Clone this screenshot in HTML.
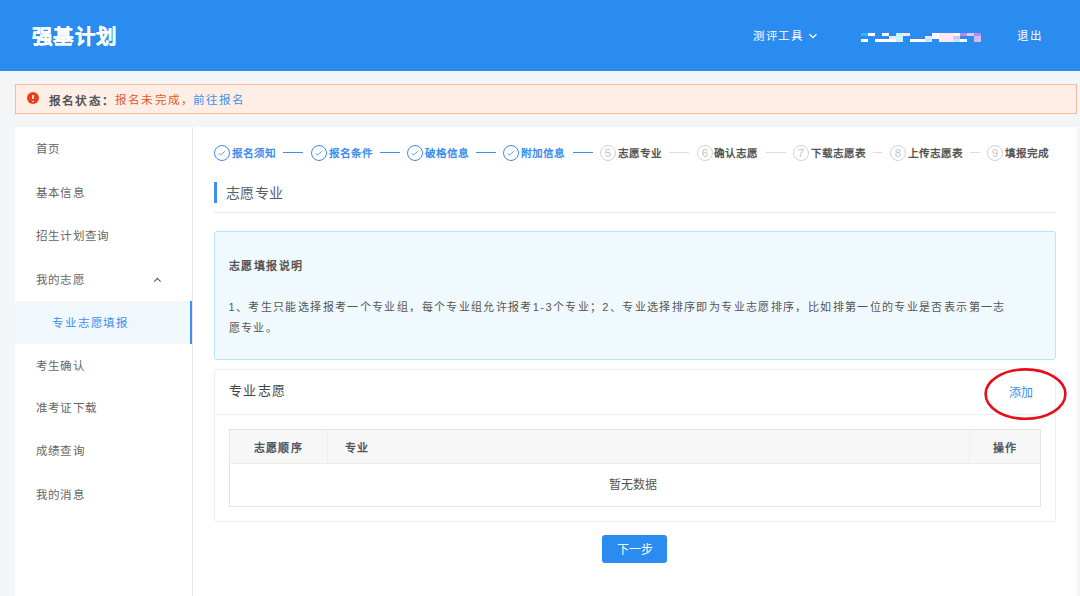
<!DOCTYPE html>
<html lang="zh-CN"><head><meta charset="utf-8">
<style>
*{margin:0;padding:0;box-sizing:border-box}
html,body{width:1080px;height:596px;overflow:hidden}
body{background:#f4f5f7;font-family:"Liberation Sans",sans-serif;color:#333;position:relative}
.a{position:absolute;white-space:nowrap}
#hdr{left:0;top:0;width:1080px;height:71px;background:#2a8cee}
#title{left:32px;top:22.5px;font-size:20.5px;letter-spacing:1.4px;font-weight:bold;color:#fff;-webkit-text-stroke:0.3px #fff;line-height:28px}
.hl{color:#fff;font-size:11.5px;letter-spacing:1.5px;line-height:16px}
#alert{left:15px;top:84px;width:1062px;height:30px;background:#ffeee6;border:1px solid #fbb99c}
#side{left:15px;top:127px;width:178px;height:469px;background:#fff;border-right:1px solid #e6e6e6}
#main{left:193px;top:127px;width:884px;height:469px;background:#fff}
.nav{left:36px;font-size:11.5px;letter-spacing:1.2px;color:#666;line-height:16px}
.st{font-size:10.6px;font-weight:bold;line-height:14px;top:146px}
.done{color:#3d8ef0}
.todo{color:#555}
.ci{width:16px;height:16px;border-radius:50%;top:145px}
.ci.d{border:1px solid #3d8ef0}
.ci.t{border:1px solid #d2d2d2;color:#c4c4c4;font-size:11.5px;line-height:14px;text-align:center;font-weight:normal}
.ln{height:1px;top:152px}
.ln.d{background:#3d8ef0}
.ln.t{background:#ddd}
</style></head>
<body>
<div id="hdr" class="a"></div>
<div id="title" class="a">强基计划</div>
<div class="a hl" style="left:753px;top:27.5px">测评工具</div>
<svg class="a" style="left:808px;top:32px" width="10" height="7" viewBox="0 0 10 7"><path d="M1.5 2.2 L5 5.6 L8.5 2.2" fill="none" stroke="#fff" stroke-width="1.3"/></svg>
<svg class="a" style="left:861px;top:33px" width="121" height="9" viewBox="0 0 121 9">
<rect x="0" y="0" width="7" height="3" fill="#2bb8f4"/><rect x="7" y="0" width="7" height="3" fill="#fff"/>
<rect x="21" y="0" width="7" height="3" fill="#fff"/><rect x="35" y="0" width="7" height="9" fill="#c8f3fb"/>
<rect x="42" y="0" width="7" height="3" fill="#fde4ee"/><rect x="28" y="3" width="7" height="3" fill="#fbe3ef"/>
<rect x="0" y="6" width="7" height="3" fill="#fff"/><rect x="14" y="6" width="21" height="3" fill="#fff"/>
<rect x="49" y="6" width="15" height="3" fill="#fff"/>
<rect x="71" y="0" width="7" height="6" fill="#fff"/><rect x="78" y="0" width="14" height="9" fill="#fde8f2"/>
<rect x="92" y="0" width="7" height="3" fill="#fdf0f6"/><rect x="99" y="0" width="7" height="3" fill="#b98ae8"/>
<rect x="106" y="0" width="7" height="3" fill="#dac8f0"/><rect x="113" y="0" width="7" height="3" fill="#b98ae8"/>
<rect x="64" y="3" width="7" height="3" fill="#efe0f4"/><rect x="92" y="3" width="7" height="3" fill="#d4c4f2"/>
<rect x="113" y="3" width="7" height="6" fill="#cdbdf0"/>
<rect x="64" y="6" width="7" height="3" fill="#b3ecfb"/><rect x="92" y="6" width="7" height="3" fill="#b3ecfb"/>
<rect x="99" y="6" width="7" height="3" fill="#fff"/>
</svg>
<div class="a hl" style="left:1017px;top:27.5px">退出</div>

<div id="alert" class="a"></div>
<div class="a" style="left:27px;top:92px;width:12px;height:12px;border-radius:50%;background:#e8401c"></div>
<div class="a" style="left:32.4px;top:94.5px;width:1.2px;height:4.5px;background:#ffd8cc"></div>
<div class="a" style="left:32.4px;top:100.5px;width:1.2px;height:1.2px;background:#ffd8cc"></div>
<div class="a" style="left:49px;top:92.5px;font-size:11.6px;line-height:16px;letter-spacing:1.2px;font-weight:bold;color:#555">报名状态：</div><div class="a" style="left:115px;top:92px;font-size:11.6px;line-height:16px;letter-spacing:1.2px;color:#e0582c">报名未完成，</div><div class="a" style="left:192.5px;top:92px;font-size:11.6px;line-height:16px;letter-spacing:1.2px;color:#3d8ef0">前往报名</div>

<div id="side" class="a"></div>
<div class="a nav" style="top:141px">首页</div>
<div class="a nav" style="top:184.5px">基本信息</div>
<div class="a nav" style="top:228px">招生计划查询</div>
<div class="a nav" style="top:271.5px">我的志愿</div>
<svg class="a" style="left:152px;top:276px" width="10" height="7" viewBox="0 0 10 7"><path d="M2.3 5.6 L5.4 2.3 L8.6 5.6" fill="none" stroke="#5a5a5a" stroke-width="1.1"/></svg>
<div class="a" style="left:15px;top:301px;width:177px;height:43px;background:#f0f8fe;border-right:2px solid #3d8ef0"></div>
<div class="a nav" style="left:52px;top:315px;letter-spacing:1.85px;color:#3d8ef0">专业志愿填报</div>
<div class="a nav" style="top:357.5px">考生确认</div>
<div class="a nav" style="top:400px">准考证下载</div>
<div class="a nav" style="top:443px">成绩查询</div>
<div class="a nav" style="top:487px">我的消息</div>

<div id="main" class="a"></div>
<!-- steps -->
<div class="a ci d" style="left:214px"><svg width="14" height="14" viewBox="0 0 14 14" style="position:absolute;left:0;top:0"><path d="M3.6 7.5 L5.6 9 L9.8 5.4" fill="none" stroke="#8a8ae6" stroke-width="1"/></svg></div>
<div class="a st done" style="left:232px">报名须知</div>
<div class="a ln d" style="left:283px;width:20px"></div>
<div class="a ci d" style="left:311px"><svg width="14" height="14" viewBox="0 0 14 14" style="position:absolute;left:0;top:0"><path d="M3.6 7.5 L5.6 9 L9.8 5.4" fill="none" stroke="#8a8ae6" stroke-width="1"/></svg></div>
<div class="a st done" style="left:329px">报名条件</div>
<div class="a ln d" style="left:380px;width:20px"></div>
<div class="a ci d" style="left:407px"><svg width="14" height="14" viewBox="0 0 14 14" style="position:absolute;left:0;top:0"><path d="M3.6 7.5 L5.6 9 L9.8 5.4" fill="none" stroke="#8a8ae6" stroke-width="1"/></svg></div>
<div class="a st done" style="left:425px">破格信息</div>
<div class="a ln d" style="left:476px;width:20px"></div>
<div class="a ci d" style="left:503px"><svg width="14" height="14" viewBox="0 0 14 14" style="position:absolute;left:0;top:0"><path d="M3.6 7.5 L5.6 9 L9.8 5.4" fill="none" stroke="#8a8ae6" stroke-width="1"/></svg></div>
<div class="a st done" style="left:521px">附加信息</div>
<div class="a ln d" style="left:573px;width:20px"></div>
<div class="a ci t" style="left:600px">5</div>
<div class="a st todo" style="left:618px">志愿专业</div>
<div class="a ln t" style="left:669px;width:20px"></div>
<div class="a ci t" style="left:697px">6</div>
<div class="a st todo" style="left:714px">确认志愿</div>
<div class="a ln t" style="left:766px;width:20px"></div>
<div class="a ci t" style="left:793px">7</div>
<div class="a st todo" style="left:811px">下载志愿表</div>
<div class="a ln t" style="left:873px;width:9px"></div>
<div class="a ci t" style="left:890px">8</div>
<div class="a st todo" style="left:908px">上传志愿表</div>
<div class="a ln t" style="left:970px;width:10px"></div>
<div class="a ci t" style="left:987px">9</div>
<div class="a st todo" style="left:1005px">填报完成</div>

<div class="a" style="left:214px;top:182px;width:3px;height:21px;background:#3d8ef0"></div>
<div class="a" style="left:225.5px;top:183.5px;font-size:14px;line-height:18px;letter-spacing:0.5px;color:#5a5e66">志愿专业</div>
<div class="a" style="left:214px;top:212px;width:842px;height:1px;background:#e4e7ed"></div>

<div class="a" style="left:214px;top:231px;width:842px;height:129px;background:#f0f9fe;border:1px solid #bde2fc;border-radius:3px"></div>
<div class="a" style="left:229px;top:258px;font-size:11px;line-height:16px;letter-spacing:1.45px;font-weight:bold;color:#555">志愿填报说明</div>
<div class="a" style="left:228.5px;top:297px;font-size:11px;line-height:20.5px;letter-spacing:1.37px;color:#555">1、考生只能选择报考一个专业组，每个专业组允许报考1-3个专业；2、专业选择排序即为专业志愿排序，比如排第一位的专业是否表示第一志<br>愿专业。</div>

<div class="a" style="left:214px;top:369px;width:842px;height:153px;background:#fff;border:1px solid #ebeef5;border-radius:3px"></div>
<div class="a" style="left:214px;top:414px;width:842px;height:1px;background:#ebeef5"></div>
<div class="a" style="left:229px;top:383px;font-size:13px;line-height:16px;letter-spacing:1.3px;color:#444">专业志愿</div>
<div class="a" style="left:1008.5px;top:385px;font-size:12px;line-height:16px;color:#3d8ef0">添加</div>
<svg class="a" style="left:980px;top:364px" width="92" height="60" viewBox="0 0 92 60"><ellipse cx="45.5" cy="30.1" rx="39.9" ry="24.7" fill="none" stroke="#e60e19" stroke-width="2.6"/></svg>

<div class="a" style="left:229px;top:429px;width:812px;height:78px;border:1px solid #e2e4e8"></div>
<div class="a" style="left:230px;top:430px;width:810px;height:34px;background:#f7f7f8;border-bottom:1px solid #e8eaee"></div>
<div class="a" style="left:327px;top:430px;width:1px;height:34px;background:#ebedf0"></div>
<div class="a" style="left:969px;top:430px;width:1px;height:34px;background:#ebedf0"></div>
<div class="a" style="left:253.5px;top:440px;font-size:11px;line-height:16px;letter-spacing:1.45px;font-weight:bold;color:#50555f">志愿顺序</div>
<div class="a" style="left:344.5px;top:440px;font-size:11px;line-height:16px;letter-spacing:1.45px;font-weight:bold;color:#50555f">专业</div>
<div class="a" style="left:992.5px;top:440px;font-size:11px;line-height:16px;letter-spacing:1.45px;font-weight:bold;color:#50555f">操作</div>
<div class="a" style="left:609px;top:477px;font-size:12px;line-height:16px;color:#555">暂无数据</div>

<div class="a" style="left:602px;top:535px;width:65px;height:28px;background:#2b8cf0;border-radius:3px;color:#fff;font-size:12px;line-height:30px;text-align:center">下一步</div>
</body></html>
